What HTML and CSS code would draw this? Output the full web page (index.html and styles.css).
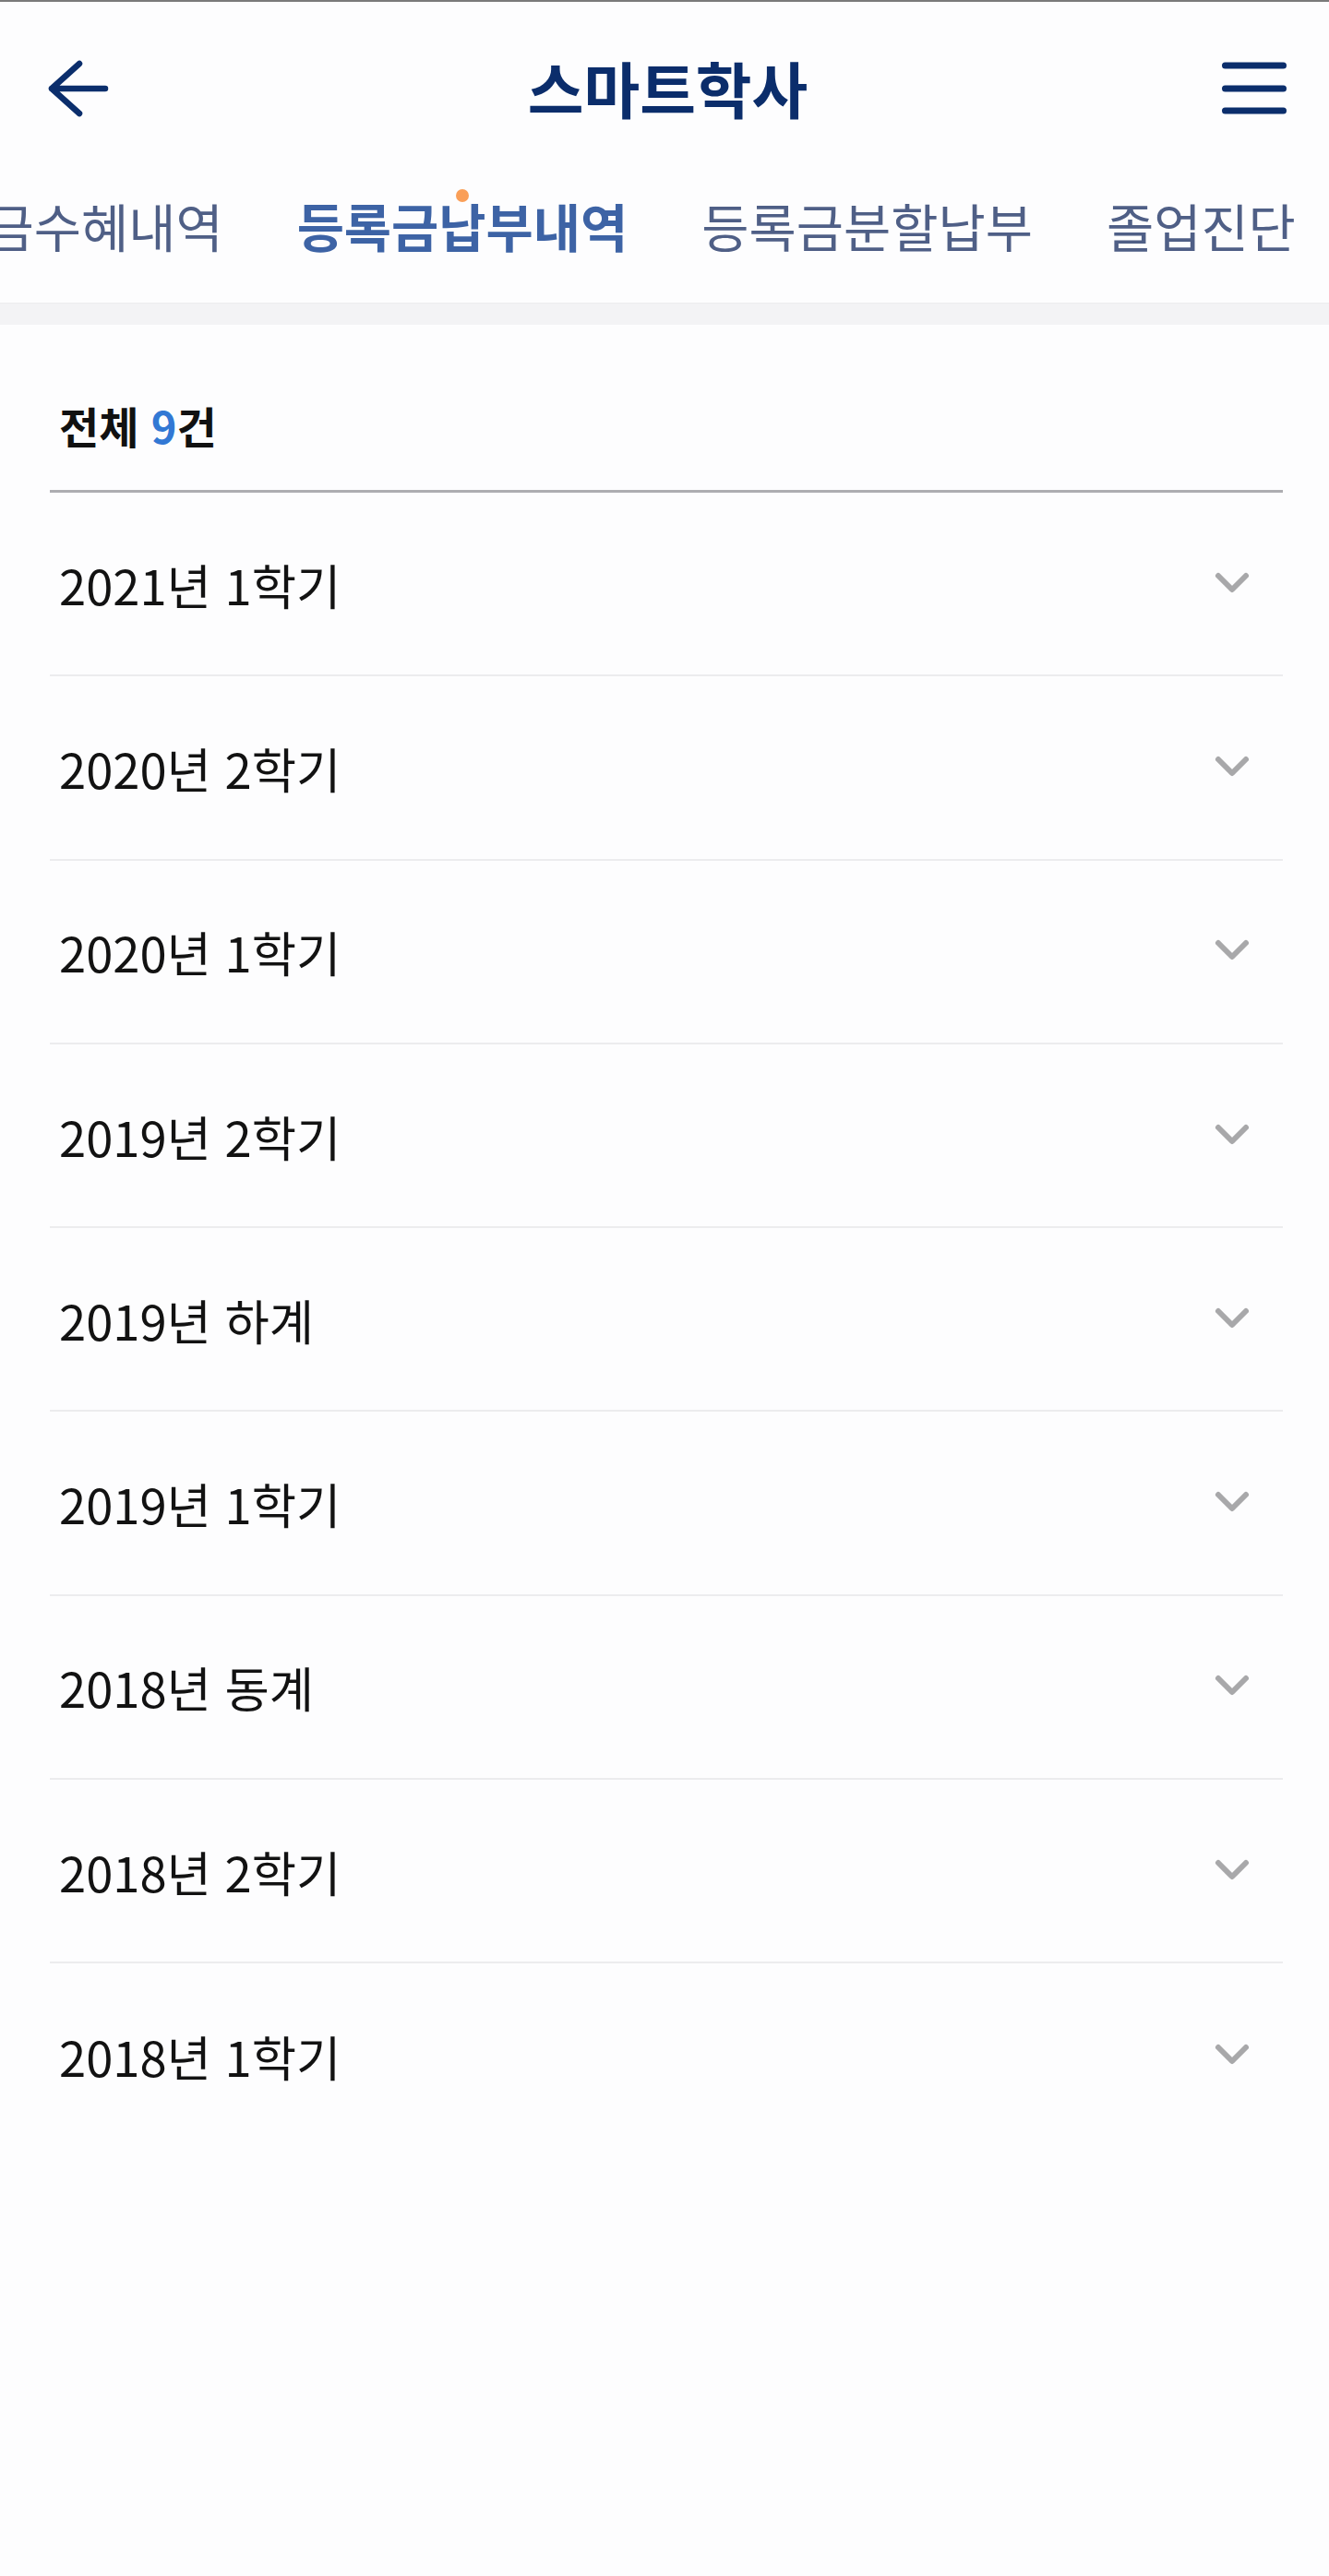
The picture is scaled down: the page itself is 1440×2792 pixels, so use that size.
FILE: index.html
```html
<!DOCTYPE html>
<html lang="ko">
<head>
<meta charset="utf-8">
<title>스마트학사</title>
<link rel="stylesheet" href="styles.css">
</head>
<body>
<div class="app">
  <header class="topbar">
    <button class="icon-btn back" aria-label="뒤로">
      <svg width="70" height="64" viewBox="0 0 70 64"><path d="M64 32H6M36 5L6 32l30 27" fill="none" stroke="#0b2e6c" stroke-width="6.5" stroke-linecap="round" stroke-linejoin="round"/></svg>
    </button>
    <h1 class="title">스마트학사</h1>
    <button class="icon-btn menu" aria-label="메뉴">
      <svg width="76" height="64" viewBox="0 0 76 64"><path d="M6.5 7h63M6.5 32h63M6.5 56h63" fill="none" stroke="#0b2e6c" stroke-width="7" stroke-linecap="round"/></svg>
    </button>
  </header>
  <nav class="tabs">
    <div class="tab-strip">
      <span class="tab">장학금수혜내역</span>
      <span class="tab active">등록금납부내역<i class="dot"></i></span>
      <span class="tab">등록금분할납부</span>
      <span class="tab">졸업진단</span>
    </div>
  </nav>
  <div class="band"></div>
  <main class="content">
    <div class="count">전체 <span class="num">9</span>건</div>
    <ul class="list">
      <li class="row"><span>2021년 1학기</span><svg class="chev" width="40" height="26" viewBox="0 0 40 26"><path d="M5 5l15 15L35 5" fill="none" stroke="#a8a8aa" stroke-width="6" stroke-linecap="round" stroke-linejoin="round"/></svg></li>
      <li class="row"><span>2020년 2학기</span><svg class="chev" width="40" height="26" viewBox="0 0 40 26"><path d="M5 5l15 15L35 5" fill="none" stroke="#a8a8aa" stroke-width="6" stroke-linecap="round" stroke-linejoin="round"/></svg></li>
      <li class="row"><span>2020년 1학기</span><svg class="chev" width="40" height="26" viewBox="0 0 40 26"><path d="M5 5l15 15L35 5" fill="none" stroke="#a8a8aa" stroke-width="6" stroke-linecap="round" stroke-linejoin="round"/></svg></li>
      <li class="row"><span>2019년 2학기</span><svg class="chev" width="40" height="26" viewBox="0 0 40 26"><path d="M5 5l15 15L35 5" fill="none" stroke="#a8a8aa" stroke-width="6" stroke-linecap="round" stroke-linejoin="round"/></svg></li>
      <li class="row"><span>2019년 하계</span><svg class="chev" width="40" height="26" viewBox="0 0 40 26"><path d="M5 5l15 15L35 5" fill="none" stroke="#a8a8aa" stroke-width="6" stroke-linecap="round" stroke-linejoin="round"/></svg></li>
      <li class="row"><span>2019년 1학기</span><svg class="chev" width="40" height="26" viewBox="0 0 40 26"><path d="M5 5l15 15L35 5" fill="none" stroke="#a8a8aa" stroke-width="6" stroke-linecap="round" stroke-linejoin="round"/></svg></li>
      <li class="row"><span>2018년 동계</span><svg class="chev" width="40" height="26" viewBox="0 0 40 26"><path d="M5 5l15 15L35 5" fill="none" stroke="#a8a8aa" stroke-width="6" stroke-linecap="round" stroke-linejoin="round"/></svg></li>
      <li class="row"><span>2018년 2학기</span><svg class="chev" width="40" height="26" viewBox="0 0 40 26"><path d="M5 5l15 15L35 5" fill="none" stroke="#a8a8aa" stroke-width="6" stroke-linecap="round" stroke-linejoin="round"/></svg></li>
      <li class="row"><span>2018년 1학기</span><svg class="chev" width="40" height="26" viewBox="0 0 40 26"><path d="M5 5l15 15L35 5" fill="none" stroke="#a8a8aa" stroke-width="6" stroke-linecap="round" stroke-linejoin="round"/></svg></li>
    </ul>
  </main>
</div>
</body>
</html>
```
FILE: styles.css
```css
* { box-sizing: border-box; }
html, body { margin: 0; padding: 0; }
body {
  background: #fdfdfe;
  font-family: "Noto Sans CJK KR", "Noto Sans", sans-serif;
  color: #111;
}
.app {
  min-height: 2792px;
  border-top: 2px solid #7a7a7a;
  background: #fdfdfe;
}
.topbar {
  height: 188px;
  display: grid;
  grid-template-columns: 1fr auto 1fr;
  align-items: center;
  padding: 0 43px 0 50px;
}
.icon-btn {
  background: none;
  border: 0;
  padding: 0;
  margin: 0;
  display: flex;
  cursor: pointer;
}
.icon-btn svg { display: block; }
.menu { justify-self: end; }
.back { justify-self: start; }
.title {
  margin: 0 0 4px;
  font-size: 66px;
  font-weight: 700;
  line-height: 74px;
  color: #0b2d6b;
}
.tabs {
  height: 138px;
  overflow: hidden;
  position: relative;
}
.tab-strip {
  display: flex;
  gap: 80px;
  margin-left: -117px;
  padding-top: 22px;
  white-space: nowrap;
}
.tab {
  position: relative;
  font-size: 55.7px;
  line-height: 64px;
  color: #4f5f86;
  font-weight: 400;
  flex: none;
}
.tab.active {
  color: #3d63a5;
  font-weight: 700;
}
.dot {
  position: absolute;
  left: 50%;
  top: -7px;
  width: 14px;
  height: 14px;
  margin-left: -7px;
  border-radius: 50%;
  background: #fa9f58;
}
.band {
  height: 24px;
  background: #f3f3f5;
  border-top: 1px solid #ececee;
}
.content {
  padding: 0 50px 0 54px;
}
.count {
  font-size: 47px;
  font-weight: 700;
  line-height: 54px;
  padding: 82px 10px 43px;
  border-bottom: 3px solid #adadb1;
  color: #111;
}
.num { color: #3278d4; }
.list {
  list-style: none;
  margin: 0;
  padding: 0;
}
.row {
  height: 199.3px;
  display: flex;
  align-items: center;
  justify-content: space-between;
  padding: 0 35px 0 10px;
  border-bottom: 2px solid #ececee;
  font-size: 52.5px;
  line-height: 62px;
  color: #121212;
}
.row:last-child { border-bottom: 0; }
.chev { display: block; margin-top: -2px; }
```
